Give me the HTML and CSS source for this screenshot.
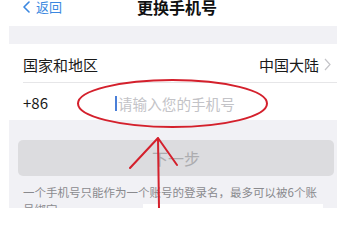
FILE: index.html
```html
<!DOCTYPE html>
<html lang="zh">
<head>
<meta charset="utf-8">
<link rel="stylesheet" href="styles.css">
</head>
<body>
<div class="screen">
  <header class="header">
    <div class="back">
      <svg class="back-icon" width="9" height="12" viewBox="0 0 9 12"><path d="M7 1 L2 6 L7 11" fill="none" stroke="#3a87e0" stroke-width="1.6" stroke-linecap="round" stroke-linejoin="round"/></svg>
      <span>返回</span>
    </div>
    <div class="title">更换手机号</div>
  </header>
  <main class="main">
    <div class="band"></div>
    <div class="group">
      <div class="cell">
        <span class="label">国家和地区</span>
        <span class="value">中国大陆
          <svg class="chev" width="7" height="13" viewBox="0 0 7 13"><path d="M1 1 L6 6.5 L1 12" fill="none" stroke="#c4c4c8" stroke-width="1.2"/></svg>
        </span>
      </div>
      <div class="cell cell-input">
        <span class="code">+86</span>
        <span class="input"><span class="cursor"></span><span class="placeholder">请输入您的手机号</span></span>
      </div>
    </div>
    <div class="btn">下一步</div>
    <p class="note">一个手机号只能作为一个账号的登录名，最多可以被6个账号绑定</p>
  </main>
  <div class="cover"></div>
  <svg class="annot" width="337" height="208" viewBox="0 0 337 208">
    <ellipse cx="172.5" cy="103.5" rx="94.5" ry="23.5" fill="none" stroke="#d4202c" stroke-width="2"/>
    <path d="M159 208 L158 138 M158 138 L130 168 M158 138 L177 165" fill="none" stroke="#d4202c" stroke-width="2" stroke-linecap="round"/>
  </svg>
</div>
</body>
</html>
```
FILE: styles.css
```css
* { box-sizing: border-box; }
html, body { margin: 0; padding: 0; background: #fff; }
body {
  font-family: "Noto Sans CJK SC", "Noto Sans", "Liberation Sans", sans-serif;
  width: 337px;
  height: 208px;
  overflow: hidden;
}
.screen { position: relative; width: 337px; height: 208px; overflow: hidden; }
.header {
  height: 26px;
  display: flex;
  align-items: flex-start;
  padding-left: 22px;
  background: #fff;
}
.back {
  display: flex;
  align-items: center;
  gap: 5px;
  color: #3a87e0;
  font-size: 13px;
  line-height: 14px;
  height: 14px;
}
.back-icon { display: block; }
.title {
  margin-left: 75px;
  font-size: 16px;
  font-weight: 600;
  line-height: 14px;
  height: 14px;
  color: #111;
}
.main {
  margin-left: 9px;
  background: #f1f1f5;
  height: 182px;
}
.band { height: 18px; }
.group { background: #fff; }
.cell {
  height: 38px;
  margin-left: 14px;
  display: flex;
  align-items: center;
  justify-content: space-between;
  padding-right: 6px;
  font-size: 15px;
  color: #1a1a1a;
}
.cell + .cell { border-top: 1px solid #e6e6e8; }
.label { padding-top: 2px; }
.value { display: flex; align-items: center; gap: 5px; padding-top: 2px; }
.chev { display: block; }
.cell-input { justify-content: flex-start; }
.code { width: 92px; padding-top: 2px; }
.input { display: flex; align-items: center; padding-top: 4px; }
.cursor { width: 2px; height: 15px; background: #4a7fd8; margin-right: 1px; }
.placeholder { color: #c3c3c7; font-size: 14.6px; }
.btn {
  margin: 20px 3px 0 9px;
  height: 36px;
  border-radius: 5px;
  background: #dcdcdf;
  color: #acacaf;
  font-size: 16px;
  display: flex;
  align-items: center;
  justify-content: center;
}
.note {
  margin: 8px 0 0 14px;
  width: 300px;
  font-size: 11.5px;
  line-height: 17px;
  color: #8a8a8e;
}
.cover {
  position: absolute;
  left: 143px;
  top: 204px;
  width: 180px;
  height: 4px;
  background: #fff;
}
.annot { position: absolute; left: 0; top: 0; pointer-events: none; }
```
